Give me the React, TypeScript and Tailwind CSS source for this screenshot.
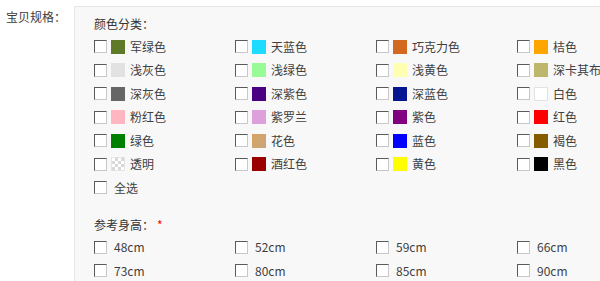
import React from "react";

type Swatch = { name: string; color: string };

const colors: Swatch[] = [
  { name: "军绿色", color: "#5f7a26" },
  { name: "天蓝色", color: "#1edcff" },
  { name: "巧克力色", color: "#d2691e" },
  { name: "桔色", color: "#ffa500" },
  { name: "浅灰色", color: "#e2e2e2" },
  { name: "浅绿色", color: "#98fb98" },
  { name: "浅黄色", color: "#ffffb4" },
  { name: "深卡其布色", color: "#bdb76b" },
  { name: "深灰色", color: "#666666" },
  { name: "深紫色", color: "#4b0082" },
  { name: "深蓝色", color: "#041690" },
  { name: "白色", color: "#ffffff" },
  { name: "粉红色", color: "#ffb6c1" },
  { name: "紫罗兰", color: "#dda0dd" },
  { name: "紫色", color: "#800080" },
  { name: "红色", color: "#ff0000" },
  { name: "绿色", color: "#008000" },
  { name: "花色", color: "flower" },
  { name: "蓝色", color: "#0000ff" },
  { name: "褐色", color: "#855b00" },
  { name: "透明", color: "clear" },
  { name: "酒红色", color: "#990000" },
  { name: "黄色", color: "#ffff00" },
  { name: "黑色", color: "#000000" },
];

const heights = ["48cm", "52cm", "59cm", "66cm", "73cm", "80cm", "85cm", "90cm"];

function Box() {
  return (
    <span className="inline-block h-[13px] w-[13px] shrink-0 border border-t-[#5a5a5a] border-l-[#5a5a5a] border-r-[#c8c8c8] border-b-[#c8c8c8] bg-white" />
  );
}

function Chip({ color }: { color: string }) {
  if (color === "clear") {
    return (
      <span className="inline-block h-[14px] w-[14px] shrink-0 border border-[#e4e4e4] bg-[repeating-conic-gradient(#d8d8d8_0_25%,#ffffff_0_50%)] bg-[length:6px_6px]" />
    );
  }
  if (color === "flower") {
    return (
      <span className="inline-block h-[14px] w-[14px] shrink-0 bg-gradient-to-br from-[#d9a35f] to-[#c8a67c]" />
    );
  }
  return (
    <span
      className={`inline-block h-[14px] w-[14px] shrink-0 ${
        color === "#ffffff" ? "border border-[#e2e2e2]" : ""
      }`}
      style={{ backgroundColor: color }}
    />
  );
}

export default function App() {
  return (
    <div
      className="flex h-[281px] w-[600px] overflow-hidden bg-white text-[12px] text-[#404040]"
      style={{ fontFamily: '"Noto Sans CJK SC", "Noto Sans", sans-serif' }}
    >
      <div className="w-[74px] shrink-0 pl-[6px] pt-[8px] leading-[18px] text-[#3c3c3c]">
        宝贝规格：
      </div>

      <div className="mt-[6px] flex-1 border-t border-l border-[#e6e6e6] bg-[#f8f8f8] pl-[19px] pt-[5px] pb-6">
        <div className="h-[23px] leading-[23px] text-[#333]">颜色分类：</div>
        <div className="grid grid-cols-[141px_141px_141px_141px]">
          {colors.map((c) => (
            <label key={c.name} className="flex h-[23.5px] items-center gap-[4px] whitespace-nowrap">
              <Box />
              <Chip color={c.color} />
              <span className="ml-[1px]">{c.name}</span>
            </label>
          ))}
          <label className="flex h-[23.5px] items-center gap-[7px]">
            <Box />
            <span>全选</span>
          </label>
        </div>

        <div className="mt-[13px] h-[23px] leading-[23px] text-[#333]">
          参考身高：<span className="ml-[3px] text-[#ff0000]">*</span>
        </div>
        <div className="grid grid-cols-[141px_141px_141px_141px]">
          {heights.map((h) => (
            <label key={h} className="flex h-[23.5px] items-center gap-[7px]">
              <Box />
              <span>{h}</span>
            </label>
          ))}
        </div>
      </div>
    </div>
  );
}
